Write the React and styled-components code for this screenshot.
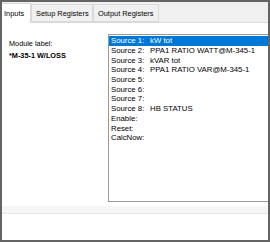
import styled, { createGlobalStyle } from "styled-components";

const GlobalStyle = createGlobalStyle`
  html, body { margin: 0; padding: 0; background: #ffffff; }
  body { font-family: "Liberation Sans", Arial, sans-serif; }
`;

const Frame = styled.div`
  width: 270px;
  height: 242px;
  box-sizing: border-box;
  border: 2px solid #646464;
  display: flex;
  flex-direction: column;
  overflow: hidden;
  background: #ffffff;
`;

const TabStrip = styled.div`
  height: 20px;
  flex: none;
  display: flex;
  align-items: flex-end;
  background: #f0f0f0;
  border-bottom: 1px solid #d9d9d9;
`;

const Tab = styled.div`
  height: ${(p) => (p.$active ? "20px" : "18px")};
  width: ${(p) => p.$w}px;
  box-sizing: border-box;
  display: flex;
  align-items: center;
  padding-left: ${(p) => p.$pad}px;
  margin-bottom: ${(p) => (p.$active ? "-1px" : "0")};
  font-size: 7.4px;
  color: #000;
  background: ${(p) => (p.$active ? "#ffffff" : "#f0f0f0")};
  border: 1px solid #d9d9d9;
  border-bottom: ${(p) => (p.$active ? "none" : "1px solid #d9d9d9")};
  border-left: ${(p) => (p.$first ? "none" : "1px solid #d9d9d9")};
  white-space: nowrap;
`;

const Page = styled.div`
  flex: 1;
  display: flex;
  flex-direction: column;
`;

const Body = styled.div`
  display: flex;
  padding-top: 11px;
  height: 179px;
  box-sizing: border-box;
`;

const LabelCol = styled.div`
  width: 106px;
  flex: none;
  padding-left: 7px;
  padding-top: 4px;
  box-sizing: border-box;
`;

const Caption = styled.div`
  font-size: 7.3px;
  line-height: 12px;
  color: #000;
`;

const ModuleName = styled.div`
  font-size: 7.3px;
  line-height: 12px;
  font-weight: bold;
  color: #000;
`;

const ListBox = styled.div`
  width: 175px;
  flex: none;
  height: 168px;
  box-sizing: border-box;
  border: 1px solid #9a9a9a;
  padding-top: 1px;
  background: #fff;
`;

const Row = styled.div`
  height: 9.7px;
  display: flex;
  align-items: center;
  padding-left: 2px;
  font-size: 7.8px;
  color: ${(p) => (p.$selected ? "#ffffff" : "#000000")};
  background: ${(p) => (p.$selected ? "#0078d7" : "transparent")};
  white-space: nowrap;
`;

const RowLabel = styled.span`
  width: 39px;
  flex: none;
`;

const Footer = styled.div`
  margin-top: 4px;
  height: 7px;
  background: #f6f6f6;
  border-bottom: 1px solid #e6e6e6;
`;

const rows = [
  ["Source 1:", "kW tot"],
  ["Source 2:", "PPA1 RATIO WATT@M-345-1"],
  ["Source 3:", "kVAR tot"],
  ["Source 4:", "PPA1 RATIO VAR@M-345-1"],
  ["Source 5:", ""],
  ["Source 6:", ""],
  ["Source 7:", ""],
  ["Source 8:", "HB STATUS"],
  ["Enable:", ""],
  ["Reset:", ""],
  ["CalcNow:", ""],
];

export default function App() {
  return (
    <>
      <GlobalStyle />
      <Frame>
        <TabStrip>
          <Tab $active $first $w={29} $pad={2}>Inputs</Tab>
          <Tab $w={62} $pad={4}>Setup Registers</Tab>
          <Tab $w={66} $pad={4}>Output Registers</Tab>
        </TabStrip>
        <Page>
          <Body>
            <LabelCol>
              <Caption>Module label:</Caption>
              <ModuleName>*M-35-1 W/LOSS</ModuleName>
            </LabelCol>
            <ListBox>
              {rows.map(([label, value], i) => (
                <Row key={label} $selected={i === 0}>
                  <RowLabel>{label}</RowLabel>
                  {value}
                </Row>
              ))}
            </ListBox>
          </Body>
          <Footer />
        </Page>
      </Frame>
    </>
  );
}
